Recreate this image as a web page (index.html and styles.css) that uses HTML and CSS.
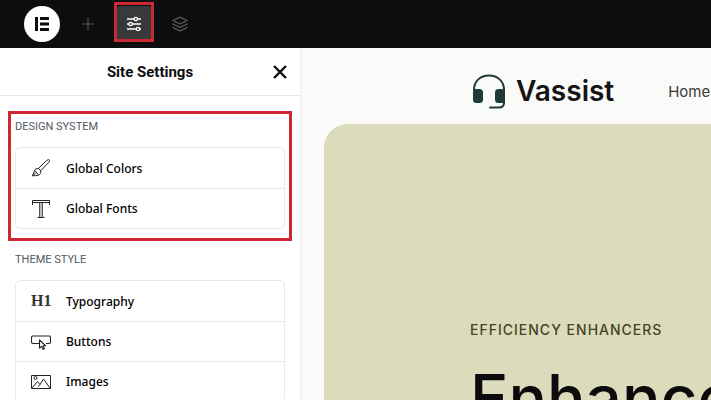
FILE: index.html
```
<!DOCTYPE html>
<html lang="en">
<head>
    <meta charset="UTF-8">
    <meta name="viewport" content="width=device-width, initial-scale=1.0">
    <title>Site Settings</title>
    <link rel="stylesheet" href="styles.css">
</head>
<body>
    <header class="topbar">
        <button type="button" class="logo-button" aria-label="Menu">
            <svg width="16" height="16" viewBox="0 0 16 16" fill="#0c0d0e">
                <path d="M1 1h3v14H1zM6 1h9v3H6zM6 6.500h9v3H6zM6 12h9v3H6z"/>
            </svg>
        </button>
        <button type="button" class="tool" aria-label="Add element">
            <svg width="18" height="18" viewBox="0 0 18 18" fill="none" stroke="#55585c" stroke-width="1.200">
                <path d="M9 3v12M3 9h12"/>
            </svg>
        </button>
        <button type="button" class="tool active" aria-label="Site settings">
            <svg width="18" height="18" viewBox="0 0 18 18" fill="none" stroke="#fff" stroke-width="1.300">
                <path d="M2 4h7M12.500 4H16M2 9h2M7 9h9M2 14h9.500M14.500 14H16"/>
                <circle cx="10.800" cy="4" r="1.700"/>
                <circle cx="5.600" cy="9" r="1.700"/>
                <circle cx="13" cy="14" r="1.700"/>
            </svg>
            <span class="marker"></span>
        </button>
        <button type="button" class="tool" aria-label="Structure">
            <svg width="18" height="18" viewBox="0 0 18 18" fill="none" stroke="#606468" stroke-width="1.100" stroke-linejoin="round" stroke-linecap="round">
                <path d="M9 2l7 3.500L9 9 2 5.500zM2 9l7 3.500L16 9M2 12.500L9 16l7-3.500"/>
            </svg>
        </button>
    </header>

    <div class="workspace">
        <aside class="panel">
            <div class="panel-header">
                <h1>Site Settings</h1>
                <button type="button" class="close" aria-label="Close">
                    <svg width="14" height="14" viewBox="0 0 14 14" fill="none" stroke="#0c0d0e" stroke-width="2.400">
                        <path d="M1 1l12 12M13 1L1 13"/>
                    </svg>
                </button>
            </div>

            <section class="group highlighted">
                <h2>DESIGN SYSTEM</h2>
                <div class="menu">
                    <button type="button" class="item">
                        <svg width="20" height="20" viewBox="0 0 20 20" fill="none" stroke="#222" stroke-width="1" stroke-linejoin="round">
                            <path d="M7.500 10.500L15 3c1.200-1.100 2.500-1.700 3.200-1.200.7.700.1 2-1 3.200l-7.500 7.700z"/>
                            <path d="M7.500 10.500l2.200 2.200c.6 2.300-.7 4-2.700 4.600-1.800.5-3.800.5-5.500.4.800-1.700 1.300-3.200 1.800-4.600.7-1.900 2.200-2.800 4.200-2.600zM3.800 12.500l3.700 4.200M1.500 17.700l4-3.200"/>
                        </svg>
                        <span>Global Colors</span>
                    </button>
                    <button type="button" class="item">
                        <svg width="20" height="20" viewBox="0 0 20 20" fill="none" stroke="#222" stroke-width="1">
                            <path d="M8.500 4v14M11.500 4v14" stroke="#555"/>
                            <path d="M10 4v14" stroke="#bbb" stroke-width="2"/>
                            <path d="M1.500 6V1.500h17V6M1.500 3.500h17M6.500 18.500h7"/>
                        </svg>
                        <span>Global Fonts</span>
                    </button>
                </div>
            </section>

            <section class="group">
                <h2>THEME STYLE</h2>
                <div class="menu">
                    <button type="button" class="item">
                        <span class="heading-icon">H1</span>
                        <span>Typography</span>
                    </button>
                    <button type="button" class="item">
                        <svg width="20" height="20" viewBox="0 0 20 20" fill="none" stroke="#222" stroke-width="1.100" stroke-linejoin="round">
                            <path d="M8 11.500H2q-1.500 0-1.500-1.500V5.500Q.5 4 2 4h16q1.500 0 1.500 1.500V10q0 1.500-1.500 1.500h-3"/>
                            <path d="M8.500 8v8l2-1.700 1.500 3 1.500-.8-1.500-2.800h2.500z" fill="#fff"/>
                        </svg>
                        <span>Buttons</span>
                    </button>
                    <button type="button" class="item">
                        <svg width="20" height="20" viewBox="0 0 20 20" fill="none" stroke="#222" stroke-width="1">
                            <path d="M.5 3.500h19v13H.5z"/>
                            <path d="M1 16l5.500-6.500L9 12.500 12.500 7 19 16M9 12.500L7.500 14.500"/>
                            <circle cx="4.500" cy="6" r="1.500"/>
                        </svg>
                        <span>Images</span>
                    </button>
                </div>
            </section>
        </aside>

        <main class="preview">
            <div class="site-header">
                <a href="#" class="brand">
                    <svg width="34" height="36" viewBox="0 0 34 36" fill="none" stroke="#203a37" stroke-width="2" stroke-linecap="round">
                        <path d="M2 23V17C2 8 8.500 2.500 17 2.500S32 8 32 17v12.500q0 5-5 5H18"/>
                        <rect x="2" y="17" width="8" height="12" rx="2.500" fill="#203a37"/>
                        <rect x="24" y="17" width="8" height="12" rx="2.500" fill="#203a37"/>
                    </svg>
                    <span>Vassist</span>
                </a>
                <nav class="site-nav">
                    <a href="#">Home</a>
                </nav>
            </div>
            <div class="hero">
                <p class="eyebrow">EFFICIENCY ENHANCERS</p>
                <p class="headline">Enhance</p>
            </div>
        </main>
    </div>
</body>
</html>
```
FILE: styles.css
```
* {
    box-sizing: border-box;
}
body {
    margin: 0;
    height: 100vh;
    display: flex;
    flex-direction: column;
    overflow: hidden;
    font-family: Roboto, sans-serif;
    color: #0c0d0e;
    background: #fff;
}
button {
    border: none;
    padding: 0;
    background: none;
    color: inherit;
    cursor: pointer;
}
h1, h2, p {
    margin: 0;
}

/* top bar */
.topbar {
    display: flex;
    align-items: center;
    gap: 10px;
    height: 48px;
    flex: none;
    padding-left: 24px;
    background: #0c0d0e;
}
.logo-button,
.tool {
    display: flex;
    align-items: center;
    justify-content: center;
    width: 36px;
    height: 36px;
}
.logo-button {
    border-radius: 50%;
    background: #fff;
}
.tool {
    position: relative;
    border-radius: 4px;
}
.tool.active {
    background: #38393b;
}
.marker {
    position: absolute;
    inset: -4px -2px 0;
    border: 3px solid #cb2831;
}

/* settings panel */
.workspace {
    display: flex;
    flex: 1;
    min-height: 0;
}
.panel {
    width: 302px;
    flex: none;
    overflow: hidden;
    background: #fff;
    border-right: 2px solid #f4f4f3;
}
.panel-header {
    display: grid;
    grid-template-columns: 40px 1fr 40px;
    align-items: center;
    height: 48px;
    border-bottom: 1px solid #e6e8ea;
}
.panel-header h1 {
    grid-column: 2;
    text-align: center;
    font-size: 15px;
    font-weight: 700;
}
.close {
    display: flex;
    justify-content: center;
}
.group {
    margin: 0 8px;
    padding: 11px 7px 12px;
}
.group.highlighted {
    margin-top: 15px;
    padding: 5px 4px 9px;
    border: 3px solid #cb2831;
}
.group h2 {
    font-size: 11px;
    font-weight: 400;
    line-height: 16px;
    margin-bottom: 12px;
    color: #515962;
}
.menu {
    border: 1px solid #e6e8ea;
    border-radius: 5px;
}
.item {
    display: flex;
    align-items: center;
    gap: 15px;
    width: 100%;
    height: 40px;
    padding: 0 15px;
    font-family: "Noto Sans", sans-serif;
    font-size: 12px;
    font-weight: 500;
    color: #000;
}
.item + .item {
    border-top: 1px solid #e6e8ea;
}
.heading-icon {
    width: 20px;
    font-family: "Liberation Serif", serif;
    font-size: 16px;
    font-weight: 700;
    color: #333;
}

/* site preview */
.preview {
    flex: 1;
    min-width: 0;
    display: flex;
    flex-direction: column;
    padding-left: 22px;
    background: #fafaf8;
}
.site-header {
    display: flex;
    align-items: center;
    gap: 54px;
    height: 76px;
    flex: none;
    padding: 10px 0 0 148px;
}
.brand {
    display: flex;
    align-items: center;
    gap: 10px;
    font-family: "Inter", sans-serif;
    font-size: 28px;
    font-weight: 600;
    color: #141414;
    text-decoration: none;
}
.site-nav a {
    font-family: "Inter", sans-serif;
    font-size: 15px;
    color: #3a3a3a;
    text-decoration: none;
}
.hero {
    flex: 1;
    min-height: 0;
    padding: 196px 0 0 146px;
    border-top-left-radius: 24px;
    background: #dcdbbb;
}
.eyebrow {
    font-family: "Inter", sans-serif;
    font-size: 14px;
    font-weight: 500;
    line-height: 20px;
    letter-spacing: 1px;
    color: #45451f;
}
.headline {
    margin-top: 22px;
    font-family: "Inter", sans-serif;
    font-size: 64px;
    font-weight: 500;
    line-height: 72px;
    color: #0b0b0b;
}
```
